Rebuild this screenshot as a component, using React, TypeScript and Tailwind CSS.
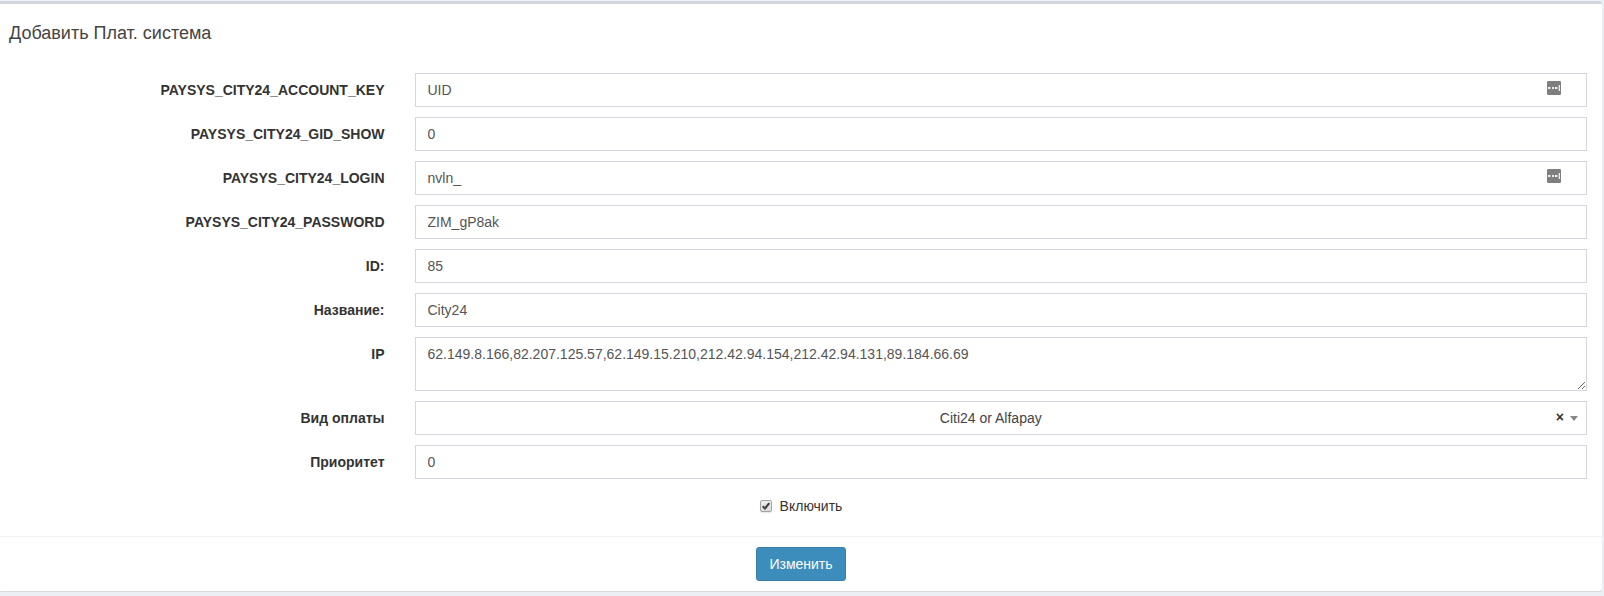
import { useState, type ReactNode } from 'react';

const control =
  'block w-full rounded-none border border-[#d2d6de] bg-white px-3 text-sm text-[#555] outline-none focus:border-[#3c8dbc]';

type RowProps = { id: string; label: string; children: ReactNode };

function Row({ id, label, children }: RowProps) {
  return (
    <div className="flex">
      <label htmlFor={id} className="w-1/4 shrink-0 px-4 pt-[7px] text-right text-sm font-bold text-[#333]">
        {label}
      </label>
      <div className="relative min-w-0 flex-1 pr-[15px] pl-3.5">{children}</div>
    </div>
  );
}

function AutofillIcon() {
  return (
    <svg
      className="pointer-events-none absolute top-2 right-[41px]"
      width="14"
      height="14"
      viewBox="0 0 14 14"
      aria-hidden="true"
    >
      <rect width="14" height="14" rx="1.2" fill="#7f7f7f" />
      <rect x="1" y="6" width="2" height="2" fill="#f2f2f2" />
      <rect x="3" y="6" width="1" height="2" fill="#a8a8a8" />
      <rect x="5" y="6" width="2" height="2" fill="#f2f2f2" />
      <rect x="8" y="6" width="2" height="2" fill="#f2f2f2" />
      <rect x="10" y="6" width="1" height="2" fill="#b5b5b5" />
      <rect x="11" y="4" width="1" height="6" fill="#9c9c9c" />
      <rect x="12" y="4" width="1" height="6" fill="#ededed" />
    </svg>
  );
}

const fields = [
  { id: 'account-key', label: 'PAYSYS_CITY24_ACCOUNT_KEY', value: 'UID', autofill: true },
  { id: 'gid-show', label: 'PAYSYS_CITY24_GID_SHOW', value: '0', autofill: false },
  { id: 'login', label: 'PAYSYS_CITY24_LOGIN', value: 'nvln_', autofill: true },
  { id: 'password', label: 'PAYSYS_CITY24_PASSWORD', value: 'ZIM_gP8ak', autofill: false },
  { id: 'system-id', label: 'ID:', value: '85', autofill: false },
  { id: 'name', label: 'Название:', value: 'City24', autofill: false },
];

export default function App() {
  const [kind, setKind] = useState('citi24');

  return (
    <div className="min-h-screen bg-[#ecf0f5] pt-px pr-0.5 font-['Liberation_Sans',Arial,sans-serif] text-[#333]">
      <form
        className="rounded-r-[3px] border-t-[3px] border-[#d2d6de] bg-white shadow-[0_1px_1px_rgba(0,0,0,0.1)]"
        onSubmit={(e) => e.preventDefault()}
      >
        <h1 className="px-[9px] pt-[15px] text-lg text-[#444]">Добавить Плат. система</h1>

        <div className="flex flex-col gap-2.5 pt-[26px] pb-5">
          {fields.map((f) => (
            <Row key={f.id} id={f.id} label={f.label}>
              <input id={f.id} type="text" defaultValue={f.value} className={`${control} h-[34px]`} />
              {f.autofill && <AutofillIcon />}
            </Row>
          ))}

          <Row id="ip" label="IP">
            <textarea
              id="ip"
              rows={2}
              defaultValue="62.149.8.166,82.207.125.57,62.149.15.210,212.42.94.154,212.42.94.131,89.184.66.69"
              className={`${control} h-[54px] resize-y py-1.5`}
            />
          </Row>

          <Row id="kind" label="Вид оплаты">
            <select
              id="kind"
              value={kind}
              onChange={(e) => setKind(e.target.value)}
              className="block h-[34px] w-full appearance-none rounded-none border border-[#d2d6de] bg-white pr-7 pl-2 text-sm text-[#444] outline-none [text-align-last:center]"
            >
              <option value=""></option>
              <option value="citi24">Citi24 or Alfapay</option>
            </select>
            <button
              type="button"
              aria-label="×"
              onClick={() => setKind('')}
              className="absolute top-2 right-[38px] h-4 text-sm leading-4 font-bold text-[#333]"
            >
              ×
            </button>
            <svg
              className="pointer-events-none absolute top-[15px] right-6"
              width="8"
              height="5"
              viewBox="0 0 8 5"
              aria-hidden="true"
            >
              <path d="M0 0h8L4 5z" fill="#888" />
            </svg>
          </Row>

          <Row id="priority" label="Приоритет">
            <input id="priority" type="text" defaultValue="0" className={`${control} h-[34px]`} />
          </Row>

          <div className="flex justify-center pt-[7px]">
            <label className="flex items-center gap-2 text-sm">
              <span className="relative inline-flex">
                <input
                  type="checkbox"
                  defaultChecked
                  className="peer size-3 appearance-none rounded-[2px] border border-[#a3a3a3] bg-linear-to-b from-[#ededed] to-[#dcdcdc] shadow-[0_1px_1px_rgba(0,0,0,0.1)]"
                />
                <svg
                  className="pointer-events-none absolute inset-0 hidden peer-checked:block"
                  width="12"
                  height="12"
                  viewBox="0 0 12 12"
                  aria-hidden="true"
                >
                  <path d="M2.7 6.3 5 8.5 9.3 3.2" fill="none" stroke="#404040" strokeWidth="2.1" />
                </svg>
              </span>
              Включить
            </label>
          </div>
        </div>

        <div className="flex justify-center border-t border-[#f4f4f4] p-2.5">
          <button
            type="submit"
            className="h-[34px] rounded-[3px] border border-[#367fa9] bg-[#3c8dbc] px-3 text-sm text-white"
          >
            Изменить
          </button>
        </div>
      </form>
    </div>
  );
}
